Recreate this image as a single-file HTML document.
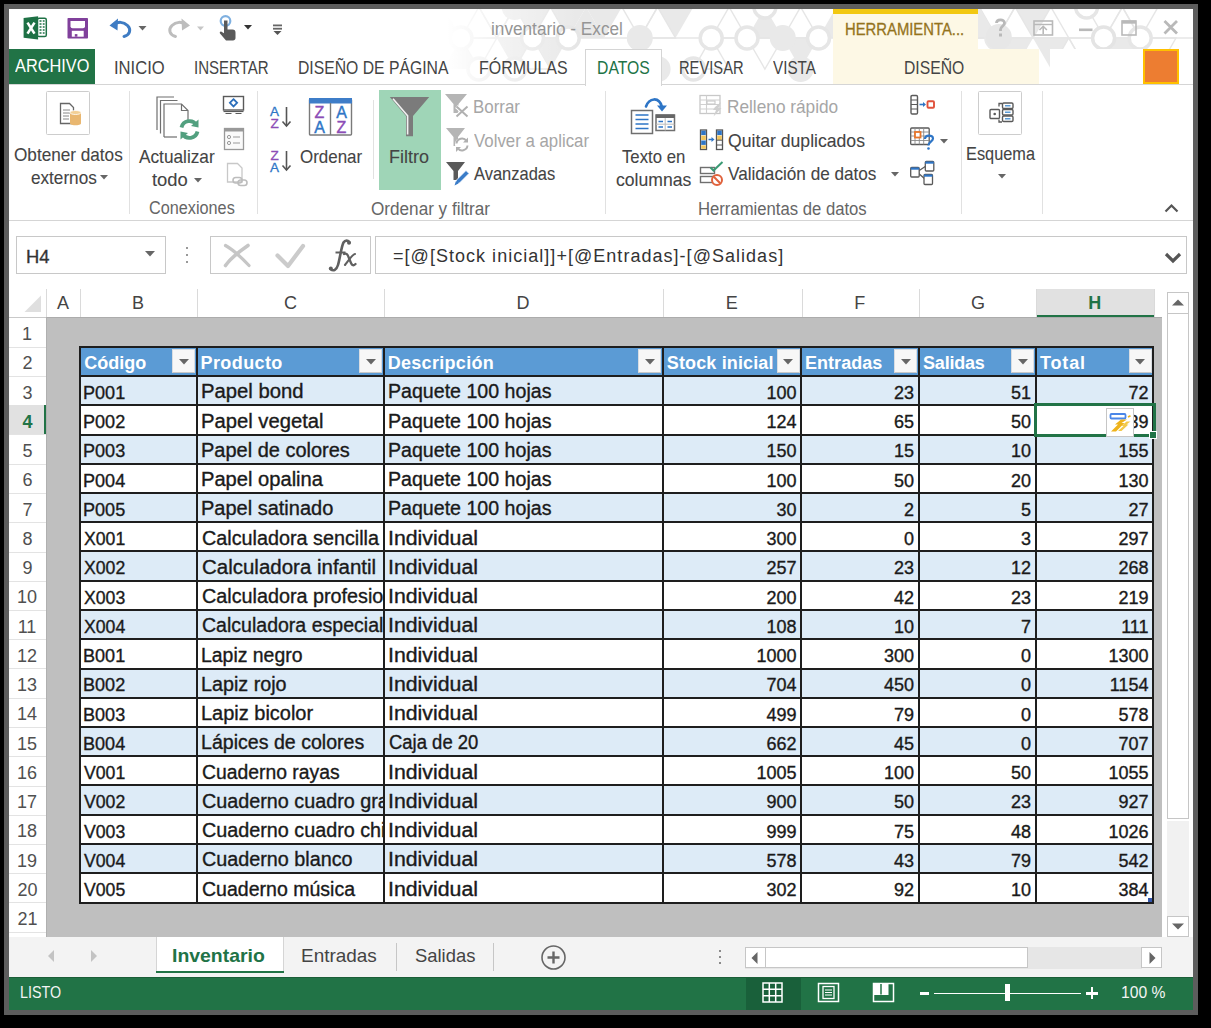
<!DOCTYPE html>
<html><head><meta charset="utf-8"><title>inventario - Excel</title>
<style>
html,body{margin:0;padding:0;}
body{width:1211px;height:1028px;overflow:hidden;position:relative;background:#000;font-family:"Liberation Sans", sans-serif;}
.a{position:absolute;}
.t{white-space:pre;line-height:1;}
svg.a{overflow:visible;}
</style></head><body>
<div class="a" style="left:4px;top:4px;width:1194px;height:1011px;background:#5d5d5d;"></div>
<div class="a" style="left:9px;top:9px;width:1184px;height:1001px;background:#ffffff;"></div>
<svg class="a" style="left:9px;top:9px;overflow:hidden" width="1184" height="75" viewBox="0 0 1184 75"><defs><linearGradient id="fade" x1="0" x2="1"><stop offset="0.37" stop-color="#fff" stop-opacity="1"/><stop offset="0.41" stop-color="#fff" stop-opacity="0.5"/><stop offset="0.48" stop-color="#fff" stop-opacity="0"/></linearGradient></defs><polygon points="398.4,-2.0 434.1,-2.0 416.2,29.0" fill="none" stroke="#e6e6e6" stroke-width="1.4"/><polygon points="380.5,29.0 416.2,29.0 398.4,-2.0" fill="#e9e9e9"/><polygon points="416.2,29.0 452.0,29.0 434.1,-2.0" fill="#e9e9e9"/><polygon points="469.9,-2.0 505.6,-2.0 487.8,29.0" fill="none" stroke="#e6e6e6" stroke-width="1.4"/><polygon points="452.0,29.0 487.8,29.0 469.9,-2.0" fill="none" stroke="#e6e6e6" stroke-width="1.4"/><polygon points="505.6,-2.0 541.4,-2.0 523.5,29.0" fill="#e9e9e9"/><polygon points="487.8,29.0 523.5,29.0 505.6,-2.0" fill="none" stroke="#e6e6e6" stroke-width="1.4"/><polygon points="541.4,-2.0 577.1,-2.0 559.2,29.0" fill="#e9e9e9"/><polygon points="523.5,29.0 559.2,29.0 541.4,-2.0" fill="none" stroke="#e6e6e6" stroke-width="1.4"/><polygon points="577.1,-2.0 612.9,-2.0 595.0,29.0" fill="#e9e9e9"/><polygon points="559.2,29.0 595.0,29.0 577.1,-2.0" fill="#e9e9e9"/><polygon points="612.9,-2.0 648.6,-2.0 630.8,29.0" fill="none" stroke="#e6e6e6" stroke-width="1.4"/><polygon points="648.6,-2.0 684.4,-2.0 666.5,29.0" fill="#e9e9e9"/><polygon points="630.8,29.0 666.5,29.0 648.6,-2.0" fill="none" stroke="#e6e6e6" stroke-width="1.4"/><polygon points="702.2,29.0 738.0,29.0 720.1,-2.0" fill="none" stroke="#e6e6e6" stroke-width="1.4"/><polygon points="738.0,29.0 773.8,29.0 755.9,-2.0" fill="#e9e9e9"/><polygon points="773.8,29.0 809.5,29.0 791.6,-2.0" fill="none" stroke="#e6e6e6" stroke-width="1.4"/><polygon points="827.4,-2.0 863.1,-2.0 845.2,29.0" fill="#e9e9e9"/><polygon points="809.5,29.0 845.2,29.0 827.4,-2.0" fill="#e9e9e9"/><polygon points="863.1,-2.0 898.9,-2.0 881.0,29.0" fill="none" stroke="#e6e6e6" stroke-width="1.4"/><polygon points="898.9,-2.0 934.6,-2.0 916.8,29.0" fill="none" stroke="#e6e6e6" stroke-width="1.4"/><polygon points="916.8,29.0 952.5,29.0 934.6,-2.0" fill="none" stroke="#e6e6e6" stroke-width="1.4"/><polygon points="970.4,-2.0 1006.1,-2.0 988.2,29.0" fill="none" stroke="#e6e6e6" stroke-width="1.4"/><polygon points="952.5,29.0 988.2,29.0 970.4,-2.0" fill="#e9e9e9"/><polygon points="1006.1,-2.0 1041.9,-2.0 1024.0,29.0" fill="#e9e9e9"/><polygon points="988.2,29.0 1024.0,29.0 1006.1,-2.0" fill="none" stroke="#e6e6e6" stroke-width="1.4"/><polygon points="1024.0,29.0 1059.8,29.0 1041.9,-2.0" fill="none" stroke="#e6e6e6" stroke-width="1.4"/><polygon points="1077.6,-2.0 1113.4,-2.0 1095.5,29.0" fill="none" stroke="#e6e6e6" stroke-width="1.4"/><polygon points="1113.4,-2.0 1149.1,-2.0 1131.2,29.0" fill="none" stroke="#e6e6e6" stroke-width="1.4"/><polygon points="1095.5,29.0 1131.2,29.0 1113.4,-2.0" fill="none" stroke="#e6e6e6" stroke-width="1.4"/><polygon points="1184.9,-2.0 1220.6,-2.0 1202.8,29.0" fill="none" stroke="#e6e6e6" stroke-width="1.4"/><polygon points="1220.6,-2.0 1256.4,-2.0 1238.5,29.0" fill="none" stroke="#e6e6e6" stroke-width="1.4"/><polygon points="398.4,60.0 434.1,60.0 416.2,29.0" fill="none" stroke="#e6e6e6" stroke-width="1.4"/><polygon points="434.1,60.0 469.9,60.0 452.0,29.0" fill="#e9e9e9"/><polygon points="452.0,29.0 487.8,29.0 469.9,60.0" fill="none" stroke="#e6e6e6" stroke-width="1.4"/><polygon points="487.8,29.0 523.5,29.0 505.6,60.0" fill="#e9e9e9"/><polygon points="505.6,60.0 541.4,60.0 523.5,29.0" fill="none" stroke="#e6e6e6" stroke-width="1.4"/><polygon points="523.5,29.0 559.2,29.0 541.4,60.0" fill="#e9e9e9"/><polygon points="612.9,60.0 648.6,60.0 630.8,29.0" fill="none" stroke="#e6e6e6" stroke-width="1.4"/><polygon points="684.4,60.0 720.1,60.0 702.2,29.0" fill="none" stroke="#e6e6e6" stroke-width="1.4"/><polygon points="738.0,29.0 773.8,29.0 755.9,60.0" fill="none" stroke="#e6e6e6" stroke-width="1.4"/><polygon points="773.8,29.0 809.5,29.0 791.6,60.0" fill="#e9e9e9"/><polygon points="863.1,60.0 898.9,60.0 881.0,29.0" fill="none" stroke="#e6e6e6" stroke-width="1.4"/><polygon points="881.0,29.0 916.8,29.0 898.9,60.0" fill="none" stroke="#e6e6e6" stroke-width="1.4"/><polygon points="916.8,29.0 952.5,29.0 934.6,60.0" fill="#e9e9e9"/><polygon points="934.6,60.0 970.4,60.0 952.5,29.0" fill="none" stroke="#e6e6e6" stroke-width="1.4"/><polygon points="952.5,29.0 988.2,29.0 970.4,60.0" fill="none" stroke="#e6e6e6" stroke-width="1.4"/><polygon points="970.4,60.0 1006.1,60.0 988.2,29.0" fill="#e9e9e9"/><polygon points="988.2,29.0 1024.0,29.0 1006.1,60.0" fill="#e9e9e9"/><polygon points="1024.0,29.0 1059.8,29.0 1041.9,60.0" fill="#e9e9e9"/><polygon points="1041.9,60.0 1077.6,60.0 1059.8,29.0" fill="none" stroke="#e6e6e6" stroke-width="1.4"/><polygon points="1059.8,29.0 1095.5,29.0 1077.6,60.0" fill="none" stroke="#e6e6e6" stroke-width="1.4"/><polygon points="1095.5,29.0 1131.2,29.0 1113.4,60.0" fill="#e9e9e9"/><polygon points="1113.4,60.0 1149.1,60.0 1131.2,29.0" fill="none" stroke="#e6e6e6" stroke-width="1.4"/><polygon points="1131.2,29.0 1167.0,29.0 1149.1,60.0" fill="none" stroke="#e6e6e6" stroke-width="1.4"/><polygon points="1202.8,29.0 1238.5,29.0 1220.6,60.0" fill="none" stroke="#e6e6e6" stroke-width="1.4"/><polygon points="1220.6,60.0 1256.4,60.0 1238.5,29.0" fill="none" stroke="#e6e6e6" stroke-width="1.4"/><path d="M0 29.0 H1184" stroke="#e6e6e6" stroke-width="1.6"/><circle cx="505.6" cy="-2.0" r="13" fill="#e9e9e9"/><circle cx="755.9" cy="-2.0" r="11" fill="#fff" stroke="#e6e6e6" stroke-width="3.5"/><circle cx="1077.6" cy="-2.0" r="11" fill="#fff" stroke="#e6e6e6" stroke-width="3.5"/><circle cx="452.0" cy="29.0" r="11" fill="#fff" stroke="#e6e6e6" stroke-width="3.5"/><circle cx="523.5" cy="29.0" r="11" fill="#fff" stroke="#e6e6e6" stroke-width="3.5"/><circle cx="559.2" cy="29.0" r="11" fill="#fff" stroke="#e6e6e6" stroke-width="3.5"/><circle cx="630.8" cy="29.0" r="13" fill="#e9e9e9"/><circle cx="702.2" cy="29.0" r="11" fill="#fff" stroke="#e6e6e6" stroke-width="3.5"/><circle cx="738.0" cy="29.0" r="11" fill="#fff" stroke="#e6e6e6" stroke-width="3.5"/><circle cx="773.8" cy="29.0" r="13" fill="#e9e9e9"/><circle cx="809.5" cy="29.0" r="11" fill="#fff" stroke="#e6e6e6" stroke-width="3.5"/><circle cx="881.0" cy="29.0" r="11" fill="#fff" stroke="#e6e6e6" stroke-width="3.5"/><circle cx="988.2" cy="29.0" r="13" fill="#e9e9e9"/><circle cx="1131.2" cy="29.0" r="11" fill="#fff" stroke="#e6e6e6" stroke-width="3.5"/><circle cx="469.9" cy="60.0" r="11" fill="#fff" stroke="#e6e6e6" stroke-width="3.5"/><circle cx="505.6" cy="60.0" r="11" fill="#fff" stroke="#e6e6e6" stroke-width="3.5"/><circle cx="648.6" cy="60.0" r="13" fill="#e9e9e9"/><circle cx="684.4" cy="60.0" r="11" fill="#fff" stroke="#e6e6e6" stroke-width="3.5"/><circle cx="791.6" cy="60.0" r="13" fill="#e9e9e9"/><circle cx="863.1" cy="60.0" r="11" fill="#fff" stroke="#e6e6e6" stroke-width="3.5"/><circle cx="1113.4" cy="60.0" r="13" fill="#e9e9e9"/><circle cx="989.8" cy="28" r="13" fill="#e7e7e7"/><circle cx="1094.6" cy="29" r="11" fill="#fff" stroke="#e4e4e4" stroke-width="3.5"/><rect x="0" y="0" width="1184" height="75" fill="url(#fade)"/></svg>
<svg class="a" style="left:23px;top:16px;" width="25" height="24" viewBox="0 0 25 24">
<path d="M0.6 1.9 L15.1 0.3 L15.1 23.4 L0.6 21.7 Z" fill="#1e7145"/>
<rect x="14.5" y="2.3" width="8.8" height="18.2" rx="1.6" fill="#fff" stroke="#1e7145" stroke-width="1.5"/>
<path d="M16.5 5h2M16.5 8h2M16.5 11h2M16.5 14h2M16.5 17h2M19.8 5h1.8M19.8 8h1.8M19.8 11h1.8M19.8 14h1.8M19.8 17h1.8" stroke="#1e7145" stroke-width="1.6"/>
<path d="M4.5 6.6 L11.5 17.6 M11.5 6.6 L4.5 17.6" stroke="#fff" stroke-width="2.6"/>
</svg>
<svg class="a" style="left:67px;top:18px;" width="22" height="21" viewBox="0 0 22 21">
<rect x="0.5" y="0" width="20.5" height="20.5" rx="0.8" fill="#80409b"/>
<path d="M3.5 3 H18 V8.2 a2 2 0 0 1 -2 2 H5.5 a2 2 0 0 1 -2 -2 Z" fill="#fff"/>
<rect x="4.8" y="12.8" width="11.9" height="5.9" fill="#fff"/>
<rect x="7.8" y="16.1" width="2.6" height="2.6" fill="#80409b"/>
</svg>
<svg class="a" style="left:109px;top:16px;" width="40" height="22" viewBox="0 0 40 22">
<path d="M4.5 8.5 C9 5.5 14.5 5.5 18.5 9.5 C22.5 13.5 21 19 15 20.5" fill="none" stroke="#3f7cc3" stroke-width="3" stroke-linecap="round"/>
<path d="M0.5 9.5 L9 2.5 L8.5 14.5 Z" fill="#3f7cc3"/>
<path d="M21.5 10 h8 l-4 4.5 z" fill="#666" transform="translate(8 0)"/>
</svg>
<svg class="a" style="left:166px;top:16px;" width="42" height="22" viewBox="0 0 42 22">
<path d="M20 8.5 C15.5 5.5 10 5.5 6 9.5 C2 13.5 3.5 19 9.5 20.5" fill="none" stroke="#bdbdbd" stroke-width="3" stroke-linecap="round"/>
<path d="M24 9.5 L15.5 2.5 L16 14.5 Z" fill="#bdbdbd"/>
<path d="M31 10.5 h7 l-3.5 4 z" fill="#c6c6c6"/>
</svg>
<svg class="a" style="left:216px;top:15px;" width="40" height="26" viewBox="0 0 40 26">
<circle cx="9.5" cy="6" r="4.8" fill="none" stroke="#7fb0e0" stroke-width="2.2"/>
<path d="M8 5.5 h3.5 v9 h5 c2 0 3 1 3 3 v5.5 c0 1.5 -1 2.5 -2.5 2.5 h-7 l-6 -7 c-0.8-1 0.3-2.5 1.5-1.8 l2.5 1.5 z" fill="#5a5a5a"/>
<path d="M28 10 h8 l-4 4.5 z" fill="#333"/>
</svg>
<svg class="a" style="left:272px;top:24px;" width="12" height="12" viewBox="0 0 12 12">
<rect x="1" y="0.5" width="9" height="1.8" fill="#666"/>
<rect x="1" y="3.8" width="9" height="1.8" fill="#666"/>
<path d="M1.5 7 h8 l-4 4 z" fill="#555"/>
</svg>
<div class="a t" style="left:490.52px;top:20.69px;font-size:17.5px;color:#959595;transform:scaleX(0.9824);transform-origin:0 0;">inventario - Excel</div>
<div class="a" style="left:833px;top:9px;width:145px;height:40px;background:#fdf8e5;"></div>
<div class="a" style="left:833px;top:9px;width:145px;height:4.5px;background:#f2c811;"></div>
<div class="a t" style="left:845.10px;top:21.43px;font-size:16.5px;color:#94731c;transform:scaleX(0.8982);transform-origin:0 0;-webkit-text-stroke:0.3px #94731c;">HERRAMIENTA...</div>
<div class="a" style="left:833px;top:49px;width:206px;height:35px;background:#fdf8e5;"></div>
<svg class="a" style="left:990px;top:15px;" width="200" height="30" viewBox="0 0 200 30">
<path d="M6.5 8 C6.5 4 14.5 3.5 14.5 8 C14.5 11 10.5 11.5 10.5 14.5 V16" fill="none" stroke="#b9b9b9" stroke-width="2.8"/>
<rect x="9" y="18.5" width="3" height="3" fill="#b9b9b9"/>
<rect x="44" y="6" width="18.5" height="14" fill="none" stroke="#b9b9b9" stroke-width="1.6"/>
<path d="M44 9.5 h18.5" stroke="#b9b9b9" stroke-width="1.4"/>
<path d="M53.2 19 v-7.5 M49.5 15 l3.7-3.7 l3.7 3.7" fill="none" stroke="#b9b9b9" stroke-width="1.6"/>
<rect x="89" y="13.5" width="13.5" height="2.6" fill="#b9b9b9"/>
<rect x="132" y="6" width="14" height="14" fill="none" stroke="#b9b9b9" stroke-width="1.6"/>
<rect x="132" y="5.5" width="14" height="3.2" fill="#b9b9b9"/>
<path d="M174.5 6 L187 18.5 M187 6 L174.5 18.5" stroke="#b9b9b9" stroke-width="2.8"/>
</svg>
<div class="a" style="left:1050px;top:49px;width:93px;height:35px;background:#ffffff;"></div>
<div class="a" style="left:1143px;top:49px;width:36px;height:35px;background:#ed7d31;box-sizing:border-box;border:2px solid #ffc000;"></div>
<div class="a" style="left:9px;top:49px;width:86px;height:35px;background:#217346;"></div>
<div class="a t" style="left:15.00px;top:57.34px;font-size:18.5px;color:#ffffff;transform:scaleX(0.8820);transform-origin:0 0;">ARCHIVO</div>
<div class="a t" style="left:113.90px;top:58.94px;font-size:18.5px;color:#444444;transform:scaleX(0.8977);transform-origin:0 0;">INICIO</div>
<div class="a t" style="left:194.49px;top:58.94px;font-size:18.5px;color:#444444;transform:scaleX(0.8124);transform-origin:0 0;">INSERTAR</div>
<div class="a t" style="left:298.45px;top:58.94px;font-size:18.5px;color:#444444;transform:scaleX(0.8511);transform-origin:0 0;">DISEÑO DE PÁGINA</div>
<div class="a t" style="left:478.74px;top:58.94px;font-size:18.5px;color:#444444;transform:scaleX(0.8615);transform-origin:0 0;">FÓRMULAS</div>
<div class="a t" style="left:678.70px;top:58.94px;font-size:18.5px;color:#444444;transform:scaleX(0.7952);transform-origin:0 0;">REVISAR</div>
<div class="a t" style="left:773.00px;top:58.94px;font-size:18.5px;color:#444444;transform:scaleX(0.8247);transform-origin:0 0;">VISTA</div>
<div class="a t" style="left:904.15px;top:58.94px;font-size:18.5px;color:#444444;transform:scaleX(0.8484);transform-origin:0 0;">DISEÑO</div>
<div class="a" style="left:9px;top:84px;width:1184px;height:1px;background:#d5d5d5;"></div>
<div class="a" style="left:585px;top:49px;width:77px;height:37px;background:#ffffff;box-sizing:border-box;border:1px solid #d5d5d5;border-bottom:none;"></div>
<div class="a t" style="left:597.15px;top:58.94px;font-size:18.5px;color:#217346;transform:scaleX(0.8520);transform-origin:0 0;">DATOS</div>
<div class="a" style="left:45.5px;top:91px;width:44px;height:43.5px;box-sizing:border-box;border:1.6px solid #cdcdcd;border-radius:1.5px;"></div>
<svg class="a" style="left:59px;top:102px;" width="24" height="24" viewBox="0 0 24 24">
<path d="M1.5 1.5 h9 l4 4 v16 h-13 z" fill="#fff" stroke="#666" stroke-width="1.3"/>
<path d="M4 8h7M4 11h7M4 14h6M4 17h6" stroke="#888" stroke-width="1"/>
<path d="M11 10.5 v11 c0 1.8 5.5 1.8 5.5 1.8 c0 0 5.5 0 5.5-1.8 v-11 z" fill="#e9b770"/>
<ellipse cx="16.5" cy="10.5" rx="5.5" ry="2" fill="#f3cf94" stroke="#fff" stroke-width="0.8"/>
</svg>
<div class="a t" style="left:14.00px;top:146.34px;font-size:18.5px;color:#444444;transform:scaleX(0.9274);transform-origin:0 0;-webkit-text-stroke:0.1px #444;">Obtener datos</div>
<div class="a t" style="left:31.00px;top:169.04px;font-size:18.5px;color:#444444;transform:scaleX(0.9264);transform-origin:0 0;-webkit-text-stroke:0.1px #444;">externos</div>
<svg class="a" style="left:100.0px;top:175px" width="8" height="5" viewBox="0 0 8 5"><path d="M0 0 H8 L4.0 4.5 Z" fill="#666"/></svg>
<div class="a" style="left:128.5px;top:91px;width:1px;height:123px;background:#e1e1e1;"></div>
<svg class="a" style="left:155px;top:96px;" width="48" height="46" viewBox="0 0 48 46">
<path d="M2 34 V1 h17" fill="none" stroke="#6f6f6f" stroke-width="1.2"/>
<path d="M5.5 37.5 V4.5 h17" fill="none" stroke="#6f6f6f" stroke-width="1.2"/>
<path d="M9 41 V8 h17.5 l6.5 6.5 v10" fill="#fff" stroke="#6f6f6f" stroke-width="1.2"/>
<path d="M9 41 h13" stroke="#6f6f6f" stroke-width="1.2"/>
<path d="M26.5 8 v6.5 h6.5" fill="none" stroke="#6f6f6f" stroke-width="1.2"/>
<circle cx="34.5" cy="33.5" r="10" fill="#fff"/>
<path d="M26.5 31.5 A8.2 8.2 0 0 1 41.5 29" fill="none" stroke="#52a07f" stroke-width="3.8"/>
<path d="M42.5 35.5 A8.2 8.2 0 0 1 27.5 38" fill="none" stroke="#52a07f" stroke-width="3.8"/>
<path d="M43.5 23.5 L43.5 31.5 L36 30 Z" fill="#52a07f"/>
<path d="M25.5 43.5 L25.5 35.5 L33 37 Z" fill="#52a07f"/>
</svg>
<div class="a t" style="left:138.50px;top:147.84px;font-size:18.5px;color:#444444;transform:scaleX(0.9313);transform-origin:0 0;-webkit-text-stroke:0.1px #444;">Actualizar</div>
<div class="a t" style="left:152.00px;top:171.34px;font-size:18.5px;color:#444444;transform:scaleX(0.9939);transform-origin:0 0;-webkit-text-stroke:0.1px #444;">todo</div>
<svg class="a" style="left:193.5px;top:178px" width="8" height="5" viewBox="0 0 8 5"><path d="M0 0 H8 L4.0 4.5 Z" fill="#666"/></svg>
<svg class="a" style="left:222px;top:95px;" width="26" height="22" viewBox="0 0 26 22">
<rect x="1.5" y="1.5" width="20" height="13.5" fill="#fff" stroke="#5a5a5a" stroke-width="1.4"/>
<path d="M1.5 16.5 h20" stroke="#5a5a5a" stroke-width="1.2"/>
<path d="M3.5 18.5 h6 M13.5 18.5 h6" stroke="#5a5a5a" stroke-width="1.2"/>
<path d="M11.5 4.2 l3.6 3.6 l-3.6 3.6 l-3.6 -3.6 z" fill="none" stroke="#2a6ebb" stroke-width="1.8"/>
</svg>
<svg class="a" style="left:223px;top:127px;" width="24" height="25" viewBox="0 0 24 25">
<rect x="1.5" y="1.5" width="19" height="21" fill="#fafafa" stroke="#999" stroke-width="1.3"/>
<rect x="1.5" y="1.5" width="19" height="3" fill="#999"/>
<circle cx="6" cy="10" r="1.6" fill="none" stroke="#999" stroke-width="1"/>
<circle cx="6" cy="16" r="1.6" fill="none" stroke="#999" stroke-width="1"/>
<path d="M10 10 h7 M10 16 h7" stroke="#999" stroke-width="1.2"/>
</svg>
<svg class="a" style="left:226px;top:162px;" width="24" height="25" viewBox="0 0 24 25">
<path d="M1.5 1.5 h10 l4.5 4.5 v14 h-14.5 z" fill="#fff" stroke="#c8c8c8" stroke-width="1.3"/>
<rect x="7" y="15.5" width="9" height="5.5" rx="2.7" fill="none" stroke="#bdbdbd" stroke-width="1.6"/>
<rect x="12" y="18" width="9" height="5.5" rx="2.7" fill="none" stroke="#bdbdbd" stroke-width="1.6"/>
</svg>
<div class="a t" style="left:149.00px;top:199.99px;font-size:17.5px;color:#666666;transform:scaleX(0.9280);transform-origin:0 0;">Conexiones</div>
<div class="a" style="left:257px;top:91px;width:1px;height:123px;background:#e1e1e1;"></div>
<svg class="a" style="left:268px;top:104px;" width="26" height="28" viewBox="0 0 26 28">
<text x="6.5" y="11.5" font-family="Liberation Sans" font-size="13.5" fill="#2e75c6" stroke="#2e75c6" stroke-width="0.3" text-anchor="middle">A</text>
<text x="6.5" y="24" font-family="Liberation Sans" font-size="13.5" fill="#8c4db6" stroke="#8c4db6" stroke-width="0.3" text-anchor="middle">Z</text>
<path d="M18.5 3 v19" stroke="#555" stroke-width="1.6"/>
<path d="M14.5 17.5 l4 4.5 l4 -4.5" fill="none" stroke="#555" stroke-width="1.6"/>
</svg>
<svg class="a" style="left:268px;top:148px;" width="26" height="28" viewBox="0 0 26 28">
<text x="6.5" y="11.5" font-family="Liberation Sans" font-size="13.5" fill="#8c4db6" stroke="#8c4db6" stroke-width="0.3" text-anchor="middle">Z</text>
<text x="6.5" y="24" font-family="Liberation Sans" font-size="13.5" fill="#2e75c6" stroke="#2e75c6" stroke-width="0.3" text-anchor="middle">A</text>
<path d="M18.5 3 v19" stroke="#555" stroke-width="1.6"/>
<path d="M14.5 17.5 l4 4.5 l4 -4.5" fill="none" stroke="#555" stroke-width="1.6"/>
</svg>
<svg class="a" style="left:308px;top:97px;" width="46" height="40" viewBox="0 0 46 40">
<rect x="1.5" y="2" width="42" height="36" rx="1" fill="#fff" stroke="#7a7a7a" stroke-width="1.4"/>
<rect x="1" y="1" width="43" height="5.5" fill="#3e7dc8"/>
<path d="M22.5 6 v32" stroke="#7a7a7a" stroke-width="1.4"/>
<text x="11.5" y="21" font-family="Liberation Sans" font-size="16" fill="#8c4db6" stroke="#8c4db6" stroke-width="0.4" text-anchor="middle">Z</text>
<text x="11.5" y="35.5" font-family="Liberation Sans" font-size="16" fill="#2e75c6" stroke="#2e75c6" stroke-width="0.4" text-anchor="middle">A</text>
<text x="33.5" y="21" font-family="Liberation Sans" font-size="16" fill="#2e75c6" stroke="#2e75c6" stroke-width="0.4" text-anchor="middle">A</text>
<text x="33.5" y="35.5" font-family="Liberation Sans" font-size="16" fill="#8c4db6" stroke="#8c4db6" stroke-width="0.4" text-anchor="middle">Z</text>
</svg>
<div class="a t" style="left:299.50px;top:148.34px;font-size:18.5px;color:#444444;transform:scaleX(0.9157);transform-origin:0 0;-webkit-text-stroke:0.1px #444;">Ordenar</div>
<div class="a" style="left:372.5px;top:100px;width:1px;height:79px;background:#e1e1e1;"></div>
<div class="a" style="left:379px;top:90px;width:62px;height:100px;background:#9fd5b7;"></div>
<svg class="a" style="left:388px;top:96px;" width="44" height="42" viewBox="0 0 44 42">
<path d="M1.8 1 H41.2 L25 20 V40.3 H18 V20 Z" fill="#7b7b7b"/>
<path d="M5 2.8 L19.6 19.8 V38.5" fill="none" stroke="#f2f2f2" stroke-width="1.6"/>
</svg>
<div class="a t" style="left:389.03px;top:148.34px;font-size:18.5px;color:#444444;transform:scaleX(0.9718);transform-origin:0 0;-webkit-text-stroke:0.1px #444;">Filtro</div>
<svg class="a" style="left:444px;top:93px;" width="28" height="26" viewBox="0 0 28 26">
<path d="M1 1 H23 L14.5 11 V20 H9.5 V11 Z" fill="#b5b5b5"/>
<path d="M12.5 13.5 L23.5 23.5 M23.5 13.5 L12.5 23.5" stroke="#fff" stroke-width="4"/>
<path d="M12.5 13.5 L23.5 23.5 M23.5 13.5 L12.5 23.5" stroke="#b0b0b0" stroke-width="2"/>
</svg>
<div class="a t" style="left:472.69px;top:98.34px;font-size:18.5px;color:#a6a6a6;transform:scaleX(0.9136);transform-origin:0 0;">Borrar</div>
<svg class="a" style="left:444px;top:127px;" width="28" height="26" viewBox="0 0 28 26">
<path d="M2 1 H21 L14 10 V19 H9.5 V10 Z" fill="#b5b5b5"/>
<circle cx="18" cy="17.5" r="7" fill="#fff"/>
<path d="M12.5 16.5 A5.5 5.5 0 0 1 22.5 14" fill="none" stroke="#b0b0b0" stroke-width="2"/>
<path d="M23.5 18.5 A5.5 5.5 0 0 1 13.5 21" fill="none" stroke="#b0b0b0" stroke-width="2"/>
<path d="M24 10.5 v5 h-5 z" fill="#b0b0b0"/>
<path d="M12 25 v-5 h5 z" fill="#b0b0b0"/>
</svg>
<div class="a t" style="left:473.60px;top:131.94px;font-size:18.5px;color:#a6a6a6;transform:scaleX(0.9096);transform-origin:0 0;">Volver a aplicar</div>
<svg class="a" style="left:444px;top:161px;" width="28" height="26" viewBox="0 0 28 26">
<path d="M2 1 H21 L14 10 V19 H9.5 V10 Z" fill="#5a5a5a"/>
<path d="M11 23.5 L12.5 19 L22 9.5 L25 12.5 L15.5 22 Z" fill="#3a7cc8" stroke="#fff" stroke-width="0.8"/>
<path d="M10.5 24.5 L12 20 L14.5 22.5 Z" fill="#3a7cc8"/>
</svg>
<div class="a t" style="left:473.60px;top:165.34px;font-size:18.5px;color:#444444;transform:scaleX(0.8906);transform-origin:0 0;-webkit-text-stroke:0.1px #444;">Avanzadas</div>
<div class="a t" style="left:371.30px;top:200.59px;font-size:17.5px;color:#666666;transform:scaleX(0.9792);transform-origin:0 0;">Ordenar y filtrar</div>
<div class="a" style="left:605px;top:91px;width:1px;height:123px;background:#e1e1e1;"></div>
<svg class="a" style="left:629px;top:95px;" width="50" height="40" viewBox="0 0 50 40">
<path d="M17 11.5 C20 3 30 1 33 12" fill="none" stroke="#2e75c6" stroke-width="2.6" stroke-linecap="round"/>
<path d="M28 10.5 L38 10.5 L33 16.5 Z" fill="#2e75c6"/>
<rect x="2.5" y="15.5" width="21" height="23" fill="#fff" stroke="#6f6f6f" stroke-width="1.5"/>
<path d="M6.5 20h13M6.5 24.5h13M6.5 29h13M6.5 33.5h13" stroke="#2e75c6" stroke-width="1.5"/>
<rect x="27" y="20" width="18.5" height="15.5" fill="#fff" stroke="#6f6f6f" stroke-width="1.5"/>
<rect x="27" y="19.5" width="18.5" height="3.5" fill="#666"/>
<path d="M36.2 23v12.5M27 29.2h18.5" stroke="#bbb" stroke-width="1"/>
<path d="M29.5 26.5h4.5M38.5 26.5h4.5M29.5 32h4.5M38.5 32h4.5" stroke="#2e75c6" stroke-width="1.6"/>
</svg>
<div class="a t" style="left:622.00px;top:148.34px;font-size:18.5px;color:#444444;transform:scaleX(0.9046);transform-origin:0 0;-webkit-text-stroke:0.1px #444;">Texto en</div>
<div class="a t" style="left:616.00px;top:170.74px;font-size:18.5px;color:#444444;transform:scaleX(0.9503);transform-origin:0 0;-webkit-text-stroke:0.1px #444;">columnas</div>
<svg class="a" style="left:698px;top:94px;" width="26" height="25" viewBox="0 0 26 25">
<rect x="2" y="1.5" width="20" height="18" fill="#fff" stroke="#c8c8c8" stroke-width="1.3"/>
<path d="M2 6h20M2 10.5h20M2 15h20M8.5 1.5v18" stroke="#d0d0d0" stroke-width="1.1"/>
<rect x="9" y="7" width="8" height="3" fill="none" stroke="#c8c8c8" stroke-width="1.1"/>
<path d="M17 13 L23 8 L20.5 14 L23.5 14 L15.5 22.5 L18 16 L15 16 Z" fill="#d0d0d0"/>
</svg>
<div class="a t" style="left:727.37px;top:98.34px;font-size:18.5px;color:#a6a6a6;transform:scaleX(0.9321);transform-origin:0 0;">Relleno rápido</div>
<svg class="a" style="left:698px;top:127px;" width="26" height="24" viewBox="0 0 26 24">
<rect x="2.5" y="3" width="6" height="19.5" fill="#fff" stroke="#555" stroke-width="1.3"/>
<rect x="3.2" y="3.7" width="4.6" height="4.4" fill="#2e75c6"/>
<rect x="3.2" y="8.6" width="4.6" height="4.4" fill="#f2c55c"/>
<rect x="3.2" y="13.5" width="4.6" height="4.4" fill="#2e75c6"/>
<rect x="3.2" y="18.4" width="4.6" height="3.4" fill="#f2c55c"/>
<rect x="18.5" y="3" width="6" height="19.5" fill="#fff" stroke="#555" stroke-width="1.3"/>
<rect x="19.2" y="3.7" width="4.6" height="4.4" fill="#2e75c6"/>
<rect x="19.2" y="8.6" width="4.6" height="4.4" fill="#f2c55c"/>
<path d="M18.5 13.2h6M18.5 18h6" stroke="#555" stroke-width="1"/>
<path d="M10.5 12.5 h4" stroke="#2e75c6" stroke-width="1.5"/>
<path d="M13.5 10 l3 2.5 l-3 2.5 z" fill="#2e75c6"/>
</svg>
<div class="a t" style="left:728.30px;top:131.94px;font-size:18.5px;color:#444444;transform:scaleX(0.9511);transform-origin:0 0;-webkit-text-stroke:0.1px #444;">Quitar duplicados</div>
<svg class="a" style="left:698px;top:160px;" width="26" height="26" viewBox="0 0 26 26">
<rect x="2.5" y="7.5" width="14" height="6" fill="#fff" stroke="#6f6f6f" stroke-width="1.4"/>
<rect x="2.5" y="16.5" width="14" height="6" fill="#fff" stroke="#6f6f6f" stroke-width="1.4"/>
<path d="M12.5 7.5 L15.5 10.5 L24.5 2" fill="none" stroke="#3b9a74" stroke-width="2"/>
<circle cx="19" cy="20" r="5" fill="#fff" stroke="#e0623c" stroke-width="2"/>
<path d="M15.8 16.8 L22.2 23.2" stroke="#e0623c" stroke-width="2"/>
</svg>
<div class="a t" style="left:728.30px;top:165.34px;font-size:18.5px;color:#444444;transform:scaleX(0.9271);transform-origin:0 0;-webkit-text-stroke:0.1px #444;">Validación de datos</div>
<svg class="a" style="left:891.0px;top:172px" width="8" height="5" viewBox="0 0 8 5"><path d="M0 0 H8 L4.0 4.5 Z" fill="#666"/></svg>
<svg class="a" style="left:908px;top:94px;" width="30" height="22" viewBox="0 0 30 22">
<rect x="3" y="1.5" width="6.5" height="18.5" rx="1.2" fill="#fff" stroke="#5a5a5a" stroke-width="1.4"/>
<path d="M3 6h6.5M3 10.5h6.5M3 15h6.5" stroke="#5a5a5a" stroke-width="1.2"/>
<path d="M11.5 10.5 h4.5" stroke="#2e75c6" stroke-width="1.6"/>
<path d="M15 8 l3 2.5 l-3 2.5 z" fill="#2e75c6"/>
<rect x="19.5" y="7.2" width="6.5" height="6.5" rx="1" fill="#fff" stroke="#e0523c" stroke-width="1.9"/>
</svg>
<svg class="a" style="left:908px;top:126px;" width="40" height="26" viewBox="0 0 40 26">
<rect x="2.7" y="2" width="18.5" height="16.5" rx="1" fill="#fff" stroke="#5a5a5a" stroke-width="1.3"/>
<path d="M2.7 6h18.5M2.7 10h18.5M2.7 14.5h18.5M7 2v16.5M11.3 2v16.5M15.7 2v16.5" stroke="#8a8a8a" stroke-width="0.9"/>
<rect x="7" y="6" width="5.5" height="5.5" fill="#fff" stroke="#e8762b" stroke-width="1.8"/>
<path d="M17 13 C17 8.5 25 8.5 25 12.5 C25 15.5 20.5 16 20.5 19.5" fill="none" stroke="#2e75c6" stroke-width="2.2"/>
<circle cx="20.5" cy="22.5" r="1.3" fill="#2e75c6"/>
<path d="M32 13 h8 l-4 4.5 z" fill="#666"/>
</svg>
<svg class="a" style="left:908px;top:160px;" width="30" height="26" viewBox="0 0 30 26">
<path d="M9 12 L18 6 M9 12 L17 19" stroke="#5a5a5a" stroke-width="1.3"/>
<rect x="2.7" y="7.5" width="8.5" height="9.5" rx="1" fill="#fff" stroke="#5a5a5a" stroke-width="1.3"/>
<rect x="2.7" y="7.5" width="8.5" height="2.2" fill="#2e75c6"/>
<rect x="17.3" y="1.5" width="8.5" height="9.5" rx="1" fill="#fff" stroke="#5a5a5a" stroke-width="1.3"/>
<rect x="17.3" y="1.5" width="8.5" height="2.2" fill="#2e75c6"/>
<rect x="16" y="14.5" width="8.5" height="10" rx="1" fill="#fff" stroke="#5a5a5a" stroke-width="1.3"/>
<rect x="16" y="14.5" width="8.5" height="2.2" fill="#2e75c6"/>
</svg>
<div class="a t" style="left:698.35px;top:200.59px;font-size:17.5px;color:#666666;transform:scaleX(0.9530);transform-origin:0 0;">Herramientas de datos</div>
<div class="a" style="left:961px;top:91px;width:1px;height:123px;background:#e1e1e1;"></div>
<div class="a" style="left:978px;top:91px;width:44px;height:43.5px;box-sizing:border-box;border:1.6px solid #cdcdcd;border-radius:1.5px;"></div>
<svg class="a" style="left:988px;top:100px;" width="26" height="24" viewBox="0 0 26 24">
<rect x="2" y="9.5" width="9.5" height="9" rx="1" fill="#fff" stroke="#5a5a5a" stroke-width="1.4"/>
<circle cx="6.7" cy="14" r="1.3" fill="#5a5a5a"/>
<path d="M14 3.5 h-3 v3 M14 22 h-3 v-2.5" fill="none" stroke="#5a5a5a" stroke-width="1.3"/>
<rect x="14.5" y="3" width="10.5" height="5.5" rx="1.2" fill="#fff" stroke="#5a5a5a" stroke-width="1.4"/>
<rect x="14.5" y="9.5" width="10.5" height="5.5" rx="1.2" fill="#fff" stroke="#5a5a5a" stroke-width="1.4"/>
<rect x="14.5" y="16" width="10.5" height="5.5" rx="1.2" fill="#fff" stroke="#5a5a5a" stroke-width="1.4"/>
<path d="M17 5.8h5.5M17 12.3h5.5M17 18.8h5.5" stroke="#5b9bd5" stroke-width="1.5"/>
</svg>
<div class="a t" style="left:966.12px;top:144.84px;font-size:18.5px;color:#444444;transform:scaleX(0.8823);transform-origin:0 0;-webkit-text-stroke:0.1px #444;">Esquema</div>
<svg class="a" style="left:998.0px;top:174px" width="8" height="5" viewBox="0 0 8 5"><path d="M0 0 H8 L4.0 4.5 Z" fill="#666"/></svg>
<div class="a" style="left:1041.5px;top:91px;width:1px;height:123px;background:#e1e1e1;"></div>
<svg class="a" style="left:1164px;top:203px;" width="16" height="11" viewBox="0 0 16 11"><path d="M1.5 8.5 L7.5 2.5 L13.5 8.5" fill="none" stroke="#555" stroke-width="2.2"/></svg>
<div class="a" style="left:9px;top:220px;width:1184px;height:1px;background:#d5d5d5;"></div>
<div class="a" style="left:16px;top:236px;width:150px;height:38px;background:#ffffff;box-sizing:border-box;border:1.5px solid #c8c8c8;"></div>
<div class="a t" style="left:25.98px;top:247.76px;font-size:18px;color:#333333;transform:scaleX(1.0228);transform-origin:0 0;-webkit-text-stroke:0.3px #333;">H4</div>
<svg class="a" style="left:145px;top:251px" width="10" height="6" viewBox="0 0 10 6"><path d="M0 0 H10 L5 5.5 Z" fill="#666"/></svg>
<div class="a" style="left:186px;top:247px;width:2.2px;height:2.2px;background:#777777;border-radius:1px;"></div>
<div class="a" style="left:186px;top:254px;width:2.2px;height:2.2px;background:#777777;border-radius:1px;"></div>
<div class="a" style="left:186px;top:261px;width:2.2px;height:2.2px;background:#777777;border-radius:1px;"></div>
<div class="a" style="left:209.5px;top:236px;width:161px;height:38px;background:#ffffff;box-sizing:border-box;border:1.5px solid #c8c8c8;"></div>
<svg class="a" style="left:222px;top:243px;" width="140" height="28" viewBox="0 0 140 28">
<path d="M3.5 2.5 C8 5 18 13 27 22.5" fill="none" stroke="#c6c6c6" stroke-width="3.2" stroke-linecap="round"/>
<path d="M26 2.5 C18 8 8 16 3.5 22.5" fill="none" stroke="#c6c6c6" stroke-width="3.6" stroke-linecap="round"/>
<path d="M55.5 12.5 L66 23 L81 3" fill="none" stroke="#cbcbcb" stroke-width="4.2" stroke-linejoin="round" stroke-linecap="round"/>
</svg>
<svg class="a" style="left:325px;top:238px;" width="34" height="36" viewBox="0 0 34 36">
<path d="M24.5 4.5 C23.5 2 20 2 18.5 4.5 C16.5 8 15 20 13 27 C11.5 32 8.5 33.5 5.5 31" fill="none" stroke="#606060" stroke-width="2.6" stroke-linecap="round"/>
<circle cx="24" cy="4.8" r="2" fill="#606060"/>
<circle cx="5.8" cy="30.6" r="2" fill="#606060"/>
<path d="M10.5 14.5 H20.5" stroke="#606060" stroke-width="2"/>
<path d="M19 16 C21 15 22.5 16 23.5 19 L26 25 C27 27.5 28.5 28 30.5 26" fill="none" stroke="#606060" stroke-width="2.3" stroke-linecap="round"/>
<path d="M30 16 C28 16 26 19 20 27" fill="none" stroke="#606060" stroke-width="2.1" stroke-linecap="round"/>
</svg>
<div class="a" style="left:375px;top:236px;width:811.5px;height:38px;background:#ffffff;box-sizing:border-box;border:1.5px solid #c8c8c8;"></div>
<div class="a t" style="left:393.00px;top:247.26px;font-size:18px;color:#333333;letter-spacing:1.03px;">=[@[Stock inicial]]+[@Entradas]-[@Salidas]</div>
<svg class="a" style="left:1164px;top:251px;" width="20" height="14" viewBox="0 0 20 14"><path d="M2 3 L9 10 L16 3" fill="none" stroke="#555" stroke-width="3.2"/></svg>
<div class="a" style="left:1036px;top:289px;width:117.5px;height:28px;background:#e1e1e1;"></div>
<div class="a" style="left:1036px;top:315px;width:117.5px;height:2.5px;background:#217346;"></div>
<div class="a" style="left:46px;top:289px;width:1px;height:28px;background:#dadada;"></div>
<div class="a" style="left:80px;top:289px;width:1px;height:28px;background:#dadada;"></div>
<div class="a" style="left:197px;top:289px;width:1px;height:28px;background:#dadada;"></div>
<div class="a" style="left:384px;top:289px;width:1px;height:28px;background:#dadada;"></div>
<div class="a" style="left:663px;top:289px;width:1px;height:28px;background:#dadada;"></div>
<div class="a" style="left:801.5px;top:289px;width:1px;height:28px;background:#dadada;"></div>
<div class="a" style="left:919px;top:289px;width:1px;height:28px;background:#dadada;"></div>
<div class="a" style="left:1036px;top:289px;width:1px;height:28px;background:#dadada;"></div>
<div class="a" style="left:1153.5px;top:289px;width:1px;height:28px;background:#dadada;"></div>
<div class="a" style="left:9px;top:317px;width:37px;height:1px;background:#c9c9c9;"></div>
<svg class="a" style="left:24px;top:295px;" width="18" height="18" viewBox="0 0 18 18"><path d="M17 0.5 V17 H0.5 Z" fill="#dfdfdf"/></svg>
<div class="a t" style="left:57.00px;top:293.96px;font-size:18px;color:#444444;">A</div>
<div class="a t" style="left:132.00px;top:293.96px;font-size:18px;color:#444444;">B</div>
<div class="a t" style="left:284.00px;top:293.96px;font-size:18px;color:#444444;">C</div>
<div class="a t" style="left:516.50px;top:293.96px;font-size:18px;color:#444444;">D</div>
<div class="a t" style="left:725.75px;top:293.96px;font-size:18px;color:#444444;">E</div>
<div class="a t" style="left:854.25px;top:293.96px;font-size:18px;color:#444444;">F</div>
<div class="a t" style="left:971.00px;top:293.96px;font-size:18px;color:#444444;">G</div>
<div class="a t" style="left:1088.25px;top:293.96px;font-size:18px;color:#217346;font-weight:700;">H</div>
<div class="a" style="left:9px;top:347px;width:37px;height:1px;background:#e3e3e3;"></div>
<div class="a t" style="left:22.00px;top:325.06px;font-size:18px;color:#505050;">1</div>
<div class="a" style="left:9px;top:376px;width:37px;height:1px;background:#e3e3e3;"></div>
<div class="a t" style="left:22.50px;top:354.31px;font-size:18px;color:#505050;">2</div>
<div class="a" style="left:9px;top:405px;width:37px;height:1px;background:#e3e3e3;"></div>
<div class="a t" style="left:22.50px;top:383.56px;font-size:18px;color:#505050;">3</div>
<div class="a" style="left:9px;top:405.25px;width:37px;height:29.25px;background:#e1e1e1;"></div>
<div class="a" style="left:43.5px;top:405.25px;width:2.5px;height:29.25px;background:#217346;"></div>
<div class="a" style="left:9px;top:434px;width:37px;height:1px;background:#e3e3e3;"></div>
<div class="a t" style="left:22.50px;top:412.81px;font-size:18px;color:#217346;font-weight:700;">4</div>
<div class="a" style="left:9px;top:464px;width:37px;height:1px;background:#e3e3e3;"></div>
<div class="a t" style="left:22.50px;top:442.06px;font-size:18px;color:#505050;">5</div>
<div class="a" style="left:9px;top:493px;width:37px;height:1px;background:#e3e3e3;"></div>
<div class="a t" style="left:22.50px;top:471.31px;font-size:18px;color:#505050;">6</div>
<div class="a" style="left:9px;top:522px;width:37px;height:1px;background:#e3e3e3;"></div>
<div class="a t" style="left:22.50px;top:500.56px;font-size:18px;color:#505050;">7</div>
<div class="a" style="left:9px;top:552px;width:37px;height:1px;background:#e3e3e3;"></div>
<div class="a t" style="left:22.50px;top:529.81px;font-size:18px;color:#505050;">8</div>
<div class="a" style="left:9px;top:581px;width:37px;height:1px;background:#e3e3e3;"></div>
<div class="a t" style="left:22.50px;top:559.06px;font-size:18px;color:#505050;">9</div>
<div class="a" style="left:9px;top:610px;width:37px;height:1px;background:#e3e3e3;"></div>
<div class="a t" style="left:16.99px;top:588.31px;font-size:18px;color:#505050;">10</div>
<div class="a" style="left:9px;top:639px;width:37px;height:1px;background:#e3e3e3;"></div>
<div class="a t" style="left:17.66px;top:617.56px;font-size:18px;color:#505050;">11</div>
<div class="a" style="left:9px;top:668px;width:37px;height:1px;background:#e3e3e3;"></div>
<div class="a t" style="left:16.99px;top:646.81px;font-size:18px;color:#505050;">12</div>
<div class="a" style="left:9px;top:698px;width:37px;height:1px;background:#e3e3e3;"></div>
<div class="a t" style="left:16.99px;top:676.06px;font-size:18px;color:#505050;">13</div>
<div class="a" style="left:9px;top:727px;width:37px;height:1px;background:#e3e3e3;"></div>
<div class="a t" style="left:16.99px;top:705.31px;font-size:18px;color:#505050;">14</div>
<div class="a" style="left:9px;top:756px;width:37px;height:1px;background:#e3e3e3;"></div>
<div class="a t" style="left:16.99px;top:734.56px;font-size:18px;color:#505050;">15</div>
<div class="a" style="left:9px;top:786px;width:37px;height:1px;background:#e3e3e3;"></div>
<div class="a t" style="left:16.99px;top:763.81px;font-size:18px;color:#505050;">16</div>
<div class="a" style="left:9px;top:815px;width:37px;height:1px;background:#e3e3e3;"></div>
<div class="a t" style="left:16.99px;top:793.06px;font-size:18px;color:#505050;">17</div>
<div class="a" style="left:9px;top:844px;width:37px;height:1px;background:#e3e3e3;"></div>
<div class="a t" style="left:16.99px;top:822.31px;font-size:18px;color:#505050;">18</div>
<div class="a" style="left:9px;top:873px;width:37px;height:1px;background:#e3e3e3;"></div>
<div class="a t" style="left:16.99px;top:851.56px;font-size:18px;color:#505050;">19</div>
<div class="a" style="left:9px;top:902px;width:37px;height:1px;background:#e3e3e3;"></div>
<div class="a t" style="left:17.49px;top:880.81px;font-size:18px;color:#505050;">20</div>
<div class="a" style="left:9px;top:932px;width:37px;height:1px;background:#e3e3e3;"></div>
<div class="a t" style="left:17.49px;top:910.06px;font-size:18px;color:#505050;">21</div>
<div class="a" style="left:46px;top:317px;width:1116px;height:620px;background:#bfbfbf;"></div>
<div class="a" style="left:46px;top:317px;width:1116px;height:1.3px;background:#acacac;"></div>
<div class="a" style="left:46px;top:317px;width:1.3px;height:620px;background:#b0b0b0;"></div>
<div class="a" style="left:80px;top:346.75px;width:1073px;height:29.25px;background:#5b9bd5;"></div>
<div class="a" style="left:80px;top:376.0px;width:1073px;height:29.25px;background:#ddebf7;"></div>
<div class="a" style="left:80px;top:405.25px;width:1073px;height:29.25px;background:#ffffff;"></div>
<div class="a" style="left:80px;top:434.5px;width:1073px;height:29.25px;background:#ddebf7;"></div>
<div class="a" style="left:80px;top:463.75px;width:1073px;height:29.25px;background:#ffffff;"></div>
<div class="a" style="left:80px;top:493.0px;width:1073px;height:29.25px;background:#ddebf7;"></div>
<div class="a" style="left:80px;top:522.25px;width:1073px;height:29.25px;background:#ffffff;"></div>
<div class="a" style="left:80px;top:551.5px;width:1073px;height:29.25px;background:#ddebf7;"></div>
<div class="a" style="left:80px;top:580.75px;width:1073px;height:29.25px;background:#ffffff;"></div>
<div class="a" style="left:80px;top:610.0px;width:1073px;height:29.25px;background:#ddebf7;"></div>
<div class="a" style="left:80px;top:639.25px;width:1073px;height:29.25px;background:#ffffff;"></div>
<div class="a" style="left:80px;top:668.5px;width:1073px;height:29.25px;background:#ddebf7;"></div>
<div class="a" style="left:80px;top:697.75px;width:1073px;height:29.25px;background:#ffffff;"></div>
<div class="a" style="left:80px;top:727.0px;width:1073px;height:29.25px;background:#ddebf7;"></div>
<div class="a" style="left:80px;top:756.25px;width:1073px;height:29.25px;background:#ffffff;"></div>
<div class="a" style="left:80px;top:785.5px;width:1073px;height:29.25px;background:#ddebf7;"></div>
<div class="a" style="left:80px;top:814.75px;width:1073px;height:29.25px;background:#ffffff;"></div>
<div class="a" style="left:80px;top:844.0px;width:1073px;height:29.25px;background:#ddebf7;"></div>
<div class="a" style="left:80px;top:873.25px;width:1073px;height:29.25px;background:#ffffff;"></div>
<div class="a" style="left:79px;top:346px;width:1075px;height:2px;background:#1e1e1e;"></div>
<div class="a" style="left:79px;top:375px;width:1075px;height:2px;background:#1e1e1e;"></div>
<div class="a" style="left:79px;top:404px;width:1075px;height:2px;background:#1e1e1e;"></div>
<div class="a" style="left:79px;top:434px;width:1075px;height:2px;background:#1e1e1e;"></div>
<div class="a" style="left:79px;top:463px;width:1075px;height:2px;background:#1e1e1e;"></div>
<div class="a" style="left:79px;top:492px;width:1075px;height:2px;background:#1e1e1e;"></div>
<div class="a" style="left:79px;top:521px;width:1075px;height:2px;background:#1e1e1e;"></div>
<div class="a" style="left:79px;top:550px;width:1075px;height:2px;background:#1e1e1e;"></div>
<div class="a" style="left:79px;top:580px;width:1075px;height:2px;background:#1e1e1e;"></div>
<div class="a" style="left:79px;top:609px;width:1075px;height:2px;background:#1e1e1e;"></div>
<div class="a" style="left:79px;top:638px;width:1075px;height:2px;background:#1e1e1e;"></div>
<div class="a" style="left:79px;top:668px;width:1075px;height:2px;background:#1e1e1e;"></div>
<div class="a" style="left:79px;top:697px;width:1075px;height:2px;background:#1e1e1e;"></div>
<div class="a" style="left:79px;top:726px;width:1075px;height:2px;background:#1e1e1e;"></div>
<div class="a" style="left:79px;top:755px;width:1075px;height:2px;background:#1e1e1e;"></div>
<div class="a" style="left:79px;top:784px;width:1075px;height:2px;background:#1e1e1e;"></div>
<div class="a" style="left:79px;top:814px;width:1075px;height:2px;background:#1e1e1e;"></div>
<div class="a" style="left:79px;top:843px;width:1075px;height:2px;background:#1e1e1e;"></div>
<div class="a" style="left:79px;top:872px;width:1075px;height:2px;background:#1e1e1e;"></div>
<div class="a" style="left:79px;top:902px;width:1075px;height:2px;background:#1e1e1e;"></div>
<div class="a" style="left:79px;top:346px;width:2px;height:558px;background:#1e1e1e;"></div>
<div class="a" style="left:196px;top:346px;width:2px;height:558px;background:#1e1e1e;"></div>
<div class="a" style="left:383px;top:346px;width:2px;height:558px;background:#1e1e1e;"></div>
<div class="a" style="left:662px;top:346px;width:2px;height:558px;background:#1e1e1e;"></div>
<div class="a" style="left:800px;top:346px;width:2px;height:558px;background:#1e1e1e;"></div>
<div class="a" style="left:918px;top:346px;width:2px;height:558px;background:#1e1e1e;"></div>
<div class="a" style="left:1035px;top:346px;width:2px;height:558px;background:#1e1e1e;"></div>
<div class="a" style="left:1152px;top:346px;width:2px;height:558px;background:#1e1e1e;"></div>
<div class="a t" style="left:84.20px;top:353.51px;font-size:18px;color:#ffffff;font-weight:700;letter-spacing:0.02px;">Código</div>
<div class="a" style="left:172px;top:349.25px;width:23px;height:24px;background:#f7f7f7;box-sizing:border-box;border:1px solid #d9dde2;border-bottom-color:#c8c8c8"></div>
<svg class="a" style="left:178.5px;top:359.25px" width="10" height="6" viewBox="0 0 10 6"><path d="M0 0 H10 L5 5.5 Z" fill="#666"/></svg>
<div class="a t" style="left:200.50px;top:353.51px;font-size:18px;color:#ffffff;font-weight:700;letter-spacing:0.41px;">Producto</div>
<div class="a" style="left:359px;top:349.25px;width:23px;height:24px;background:#f7f7f7;box-sizing:border-box;border:1px solid #d9dde2;border-bottom-color:#c8c8c8"></div>
<svg class="a" style="left:365.5px;top:359.25px" width="10" height="6" viewBox="0 0 10 6"><path d="M0 0 H10 L5 5.5 Z" fill="#666"/></svg>
<div class="a t" style="left:387.70px;top:353.51px;font-size:18px;color:#ffffff;font-weight:700;letter-spacing:0.30px;">Descripción</div>
<div class="a" style="left:638px;top:349.25px;width:23px;height:24px;background:#f7f7f7;box-sizing:border-box;border:1px solid #d9dde2;border-bottom-color:#c8c8c8"></div>
<svg class="a" style="left:644.5px;top:359.25px" width="10" height="6" viewBox="0 0 10 6"><path d="M0 0 H10 L5 5.5 Z" fill="#666"/></svg>
<div class="a t" style="left:666.80px;top:353.51px;font-size:18px;color:#ffffff;font-weight:700;letter-spacing:0.14px;">Stock inicial</div>
<div class="a" style="left:776.5px;top:349.25px;width:23px;height:24px;background:#f7f7f7;box-sizing:border-box;border:1px solid #d9dde2;border-bottom-color:#c8c8c8"></div>
<svg class="a" style="left:783.0px;top:359.25px" width="10" height="6" viewBox="0 0 10 6"><path d="M0 0 H10 L5 5.5 Z" fill="#666"/></svg>
<div class="a t" style="left:805.00px;top:353.51px;font-size:18px;color:#ffffff;font-weight:700;letter-spacing:0.04px;">Entradas</div>
<div class="a" style="left:894px;top:349.25px;width:23px;height:24px;background:#f7f7f7;box-sizing:border-box;border:1px solid #d9dde2;border-bottom-color:#c8c8c8"></div>
<svg class="a" style="left:900.5px;top:359.25px" width="10" height="6" viewBox="0 0 10 6"><path d="M0 0 H10 L5 5.5 Z" fill="#666"/></svg>
<div class="a t" style="left:923.10px;top:353.51px;font-size:18px;color:#ffffff;font-weight:700;letter-spacing:-0.24px;">Salidas</div>
<div class="a" style="left:1011px;top:349.25px;width:23px;height:24px;background:#f7f7f7;box-sizing:border-box;border:1px solid #d9dde2;border-bottom-color:#c8c8c8"></div>
<svg class="a" style="left:1017.5px;top:359.25px" width="10" height="6" viewBox="0 0 10 6"><path d="M0 0 H10 L5 5.5 Z" fill="#666"/></svg>
<div class="a t" style="left:1040.00px;top:353.51px;font-size:18px;color:#ffffff;font-weight:700;letter-spacing:0.86px;">Total</div>
<div class="a" style="left:1128.5px;top:349.25px;width:23px;height:24px;background:#f7f7f7;box-sizing:border-box;border:1px solid #d9dde2;border-bottom-color:#c8c8c8"></div>
<svg class="a" style="left:1135.0px;top:359.25px" width="10" height="6" viewBox="0 0 10 6"><path d="M0 0 H10 L5 5.5 Z" fill="#666"/></svg>
<div class="a t" style="left:83.30px;top:383.76px;font-size:18px;color:#1a1a1a;transform:scaleX(1.0042);transform-origin:0 0;-webkit-text-stroke:0.35px #1a1a1a;">P001</div>
<div class="a" style="left:198px;top:376.0px;width:185px;height:29.25px;overflow:hidden">
<div class="a t" style="left:2.56px;top:6.49px;font-size:19.5px;color:#1a1a1a;transform:scaleX(1.0390);transform-origin:0 0;-webkit-text-stroke:0.35px #1a1a1a;">Papel bond</div>
</div>
<div class="a t" style="left:387.99px;top:382.49px;font-size:19.5px;color:#1a1a1a;transform:scaleX(1.0050);transform-origin:0 0;-webkit-text-stroke:0.35px #1a1a1a;">Paquete 100 hojas</div>
<div class="a t" style="left:766.48px;top:383.76px;font-size:18px;color:#1a1a1a;-webkit-text-stroke:0.35px #1a1a1a;">100</div>
<div class="a t" style="left:893.99px;top:383.76px;font-size:18px;color:#1a1a1a;-webkit-text-stroke:0.35px #1a1a1a;">23</div>
<div class="a t" style="left:1010.99px;top:383.76px;font-size:18px;color:#1a1a1a;-webkit-text-stroke:0.35px #1a1a1a;">51</div>
<div class="a t" style="left:1128.49px;top:383.76px;font-size:18px;color:#1a1a1a;-webkit-text-stroke:0.35px #1a1a1a;">72</div>
<div class="a t" style="left:83.30px;top:413.01px;font-size:18px;color:#1a1a1a;transform:scaleX(1.0042);transform-origin:0 0;-webkit-text-stroke:0.35px #1a1a1a;">P002</div>
<div class="a" style="left:198px;top:405.25px;width:185px;height:29.25px;overflow:hidden">
<div class="a t" style="left:2.56px;top:6.49px;font-size:19.5px;color:#1a1a1a;transform:scaleX(1.0365);transform-origin:0 0;-webkit-text-stroke:0.35px #1a1a1a;">Papel vegetal</div>
</div>
<div class="a t" style="left:387.99px;top:411.74px;font-size:19.5px;color:#1a1a1a;transform:scaleX(1.0050);transform-origin:0 0;-webkit-text-stroke:0.35px #1a1a1a;">Paquete 100 hojas</div>
<div class="a t" style="left:766.48px;top:413.01px;font-size:18px;color:#1a1a1a;-webkit-text-stroke:0.35px #1a1a1a;">124</div>
<div class="a t" style="left:893.99px;top:413.01px;font-size:18px;color:#1a1a1a;-webkit-text-stroke:0.35px #1a1a1a;">65</div>
<div class="a t" style="left:1010.99px;top:413.01px;font-size:18px;color:#1a1a1a;-webkit-text-stroke:0.35px #1a1a1a;">50</div>
<div class="a t" style="left:1118.48px;top:413.01px;font-size:18px;color:#1a1a1a;-webkit-text-stroke:0.35px #1a1a1a;">139</div>
<div class="a t" style="left:83.30px;top:442.26px;font-size:18px;color:#1a1a1a;transform:scaleX(1.0042);transform-origin:0 0;-webkit-text-stroke:0.35px #1a1a1a;">P003</div>
<div class="a" style="left:198px;top:434.5px;width:185px;height:29.25px;overflow:hidden">
<div class="a t" style="left:2.58px;top:6.49px;font-size:19.5px;color:#1a1a1a;transform:scaleX(1.0248);transform-origin:0 0;-webkit-text-stroke:0.35px #1a1a1a;">Papel de colores</div>
</div>
<div class="a t" style="left:387.99px;top:440.99px;font-size:19.5px;color:#1a1a1a;transform:scaleX(1.0050);transform-origin:0 0;-webkit-text-stroke:0.35px #1a1a1a;">Paquete 100 hojas</div>
<div class="a t" style="left:766.48px;top:442.26px;font-size:18px;color:#1a1a1a;-webkit-text-stroke:0.35px #1a1a1a;">150</div>
<div class="a t" style="left:893.99px;top:442.26px;font-size:18px;color:#1a1a1a;-webkit-text-stroke:0.35px #1a1a1a;">15</div>
<div class="a t" style="left:1010.99px;top:442.26px;font-size:18px;color:#1a1a1a;-webkit-text-stroke:0.35px #1a1a1a;">10</div>
<div class="a t" style="left:1118.48px;top:442.26px;font-size:18px;color:#1a1a1a;-webkit-text-stroke:0.35px #1a1a1a;">155</div>
<div class="a t" style="left:83.30px;top:471.51px;font-size:18px;color:#1a1a1a;transform:scaleX(1.0042);transform-origin:0 0;-webkit-text-stroke:0.35px #1a1a1a;">P004</div>
<div class="a" style="left:198px;top:463.75px;width:185px;height:29.25px;overflow:hidden">
<div class="a t" style="left:2.57px;top:6.49px;font-size:19.5px;color:#1a1a1a;transform:scaleX(1.0321);transform-origin:0 0;-webkit-text-stroke:0.35px #1a1a1a;">Papel opalina</div>
</div>
<div class="a t" style="left:387.99px;top:470.24px;font-size:19.5px;color:#1a1a1a;transform:scaleX(1.0050);transform-origin:0 0;-webkit-text-stroke:0.35px #1a1a1a;">Paquete 100 hojas</div>
<div class="a t" style="left:766.48px;top:471.51px;font-size:18px;color:#1a1a1a;-webkit-text-stroke:0.35px #1a1a1a;">100</div>
<div class="a t" style="left:893.99px;top:471.51px;font-size:18px;color:#1a1a1a;-webkit-text-stroke:0.35px #1a1a1a;">50</div>
<div class="a t" style="left:1010.99px;top:471.51px;font-size:18px;color:#1a1a1a;-webkit-text-stroke:0.35px #1a1a1a;">20</div>
<div class="a t" style="left:1118.48px;top:471.51px;font-size:18px;color:#1a1a1a;-webkit-text-stroke:0.35px #1a1a1a;">130</div>
<div class="a t" style="left:83.30px;top:500.76px;font-size:18px;color:#1a1a1a;transform:scaleX(1.0042);transform-origin:0 0;-webkit-text-stroke:0.35px #1a1a1a;">P005</div>
<div class="a" style="left:198px;top:493.0px;width:185px;height:29.25px;overflow:hidden">
<div class="a t" style="left:2.57px;top:6.49px;font-size:19.5px;color:#1a1a1a;transform:scaleX(1.0252);transform-origin:0 0;-webkit-text-stroke:0.35px #1a1a1a;">Papel satinado</div>
</div>
<div class="a t" style="left:387.99px;top:499.49px;font-size:19.5px;color:#1a1a1a;transform:scaleX(1.0050);transform-origin:0 0;-webkit-text-stroke:0.35px #1a1a1a;">Paquete 100 hojas</div>
<div class="a t" style="left:776.49px;top:500.76px;font-size:18px;color:#1a1a1a;-webkit-text-stroke:0.35px #1a1a1a;">30</div>
<div class="a t" style="left:904.00px;top:500.76px;font-size:18px;color:#1a1a1a;-webkit-text-stroke:0.35px #1a1a1a;">2</div>
<div class="a t" style="left:1021.00px;top:500.76px;font-size:18px;color:#1a1a1a;-webkit-text-stroke:0.35px #1a1a1a;">5</div>
<div class="a t" style="left:1128.49px;top:500.76px;font-size:18px;color:#1a1a1a;-webkit-text-stroke:0.35px #1a1a1a;">27</div>
<div class="a t" style="left:84.30px;top:530.01px;font-size:18px;color:#1a1a1a;transform:scaleX(0.9803);transform-origin:0 0;-webkit-text-stroke:0.35px #1a1a1a;">X001</div>
<div class="a" style="left:198px;top:522.25px;width:185px;height:29.25px;overflow:hidden">
<div class="a t" style="left:3.60px;top:6.49px;font-size:19.5px;color:#1a1a1a;transform:scaleX(1.0139);transform-origin:0 0;-webkit-text-stroke:0.35px #1a1a1a;">Calculadora sencilla</div>
</div>
<div class="a t" style="left:387.91px;top:528.74px;font-size:19.5px;color:#1a1a1a;transform:scaleX(1.0918);transform-origin:0 0;-webkit-text-stroke:0.35px #1a1a1a;">Individual</div>
<div class="a t" style="left:766.48px;top:530.01px;font-size:18px;color:#1a1a1a;-webkit-text-stroke:0.35px #1a1a1a;">300</div>
<div class="a t" style="left:904.00px;top:530.01px;font-size:18px;color:#1a1a1a;-webkit-text-stroke:0.35px #1a1a1a;">0</div>
<div class="a t" style="left:1021.00px;top:530.01px;font-size:18px;color:#1a1a1a;-webkit-text-stroke:0.35px #1a1a1a;">3</div>
<div class="a t" style="left:1118.48px;top:530.01px;font-size:18px;color:#1a1a1a;-webkit-text-stroke:0.35px #1a1a1a;">297</div>
<div class="a t" style="left:84.30px;top:559.26px;font-size:18px;color:#1a1a1a;transform:scaleX(0.9803);transform-origin:0 0;-webkit-text-stroke:0.35px #1a1a1a;">X002</div>
<div class="a" style="left:198px;top:551.5px;width:185px;height:29.25px;overflow:hidden">
<div class="a t" style="left:3.60px;top:6.49px;font-size:19.5px;color:#1a1a1a;transform:scaleX(1.0501);transform-origin:0 0;-webkit-text-stroke:0.35px #1a1a1a;">Calculadora infantil</div>
</div>
<div class="a t" style="left:387.91px;top:557.99px;font-size:19.5px;color:#1a1a1a;transform:scaleX(1.0918);transform-origin:0 0;-webkit-text-stroke:0.35px #1a1a1a;">Individual</div>
<div class="a t" style="left:766.48px;top:559.26px;font-size:18px;color:#1a1a1a;-webkit-text-stroke:0.35px #1a1a1a;">257</div>
<div class="a t" style="left:893.99px;top:559.26px;font-size:18px;color:#1a1a1a;-webkit-text-stroke:0.35px #1a1a1a;">23</div>
<div class="a t" style="left:1010.99px;top:559.26px;font-size:18px;color:#1a1a1a;-webkit-text-stroke:0.35px #1a1a1a;">12</div>
<div class="a t" style="left:1118.48px;top:559.26px;font-size:18px;color:#1a1a1a;-webkit-text-stroke:0.35px #1a1a1a;">268</div>
<div class="a t" style="left:84.30px;top:588.51px;font-size:18px;color:#1a1a1a;transform:scaleX(0.9803);transform-origin:0 0;-webkit-text-stroke:0.35px #1a1a1a;">X003</div>
<div class="a" style="left:198px;top:580.75px;width:185px;height:29.25px;overflow:hidden">
<div class="a t" style="left:3.60px;top:6.49px;font-size:19.5px;color:#1a1a1a;transform:scaleX(1.0140);transform-origin:0 0;-webkit-text-stroke:0.35px #1a1a1a;">Calculadora profesional</div>
</div>
<div class="a t" style="left:387.91px;top:587.24px;font-size:19.5px;color:#1a1a1a;transform:scaleX(1.0918);transform-origin:0 0;-webkit-text-stroke:0.35px #1a1a1a;">Individual</div>
<div class="a t" style="left:766.48px;top:588.51px;font-size:18px;color:#1a1a1a;-webkit-text-stroke:0.35px #1a1a1a;">200</div>
<div class="a t" style="left:893.99px;top:588.51px;font-size:18px;color:#1a1a1a;-webkit-text-stroke:0.35px #1a1a1a;">42</div>
<div class="a t" style="left:1010.99px;top:588.51px;font-size:18px;color:#1a1a1a;-webkit-text-stroke:0.35px #1a1a1a;">23</div>
<div class="a t" style="left:1118.48px;top:588.51px;font-size:18px;color:#1a1a1a;-webkit-text-stroke:0.35px #1a1a1a;">219</div>
<div class="a t" style="left:84.30px;top:617.76px;font-size:18px;color:#1a1a1a;transform:scaleX(0.9803);transform-origin:0 0;-webkit-text-stroke:0.35px #1a1a1a;">X004</div>
<div class="a" style="left:198px;top:610.0px;width:185px;height:29.25px;overflow:hidden">
<div class="a t" style="left:3.60px;top:6.49px;font-size:19.5px;color:#1a1a1a;transform:scaleX(1.0017);transform-origin:0 0;-webkit-text-stroke:0.35px #1a1a1a;">Calculadora especial</div>
</div>
<div class="a t" style="left:387.91px;top:616.49px;font-size:19.5px;color:#1a1a1a;transform:scaleX(1.0918);transform-origin:0 0;-webkit-text-stroke:0.35px #1a1a1a;">Individual</div>
<div class="a t" style="left:766.48px;top:617.76px;font-size:18px;color:#1a1a1a;-webkit-text-stroke:0.35px #1a1a1a;">108</div>
<div class="a t" style="left:893.99px;top:617.76px;font-size:18px;color:#1a1a1a;-webkit-text-stroke:0.35px #1a1a1a;">10</div>
<div class="a t" style="left:1021.00px;top:617.76px;font-size:18px;color:#1a1a1a;-webkit-text-stroke:0.35px #1a1a1a;">7</div>
<div class="a t" style="left:1121.15px;top:617.76px;font-size:18px;color:#1a1a1a;-webkit-text-stroke:0.35px #1a1a1a;">111</div>
<div class="a t" style="left:83.30px;top:647.01px;font-size:18px;color:#1a1a1a;transform:scaleX(1.0042);transform-origin:0 0;-webkit-text-stroke:0.35px #1a1a1a;">B001</div>
<div class="a" style="left:198px;top:639.25px;width:185px;height:29.25px;overflow:hidden">
<div class="a t" style="left:2.60px;top:6.49px;font-size:19.5px;color:#1a1a1a;transform:scaleX(0.9954);transform-origin:0 0;-webkit-text-stroke:0.35px #1a1a1a;">Lapiz negro</div>
</div>
<div class="a t" style="left:387.91px;top:645.74px;font-size:19.5px;color:#1a1a1a;transform:scaleX(1.0918);transform-origin:0 0;-webkit-text-stroke:0.35px #1a1a1a;">Individual</div>
<div class="a t" style="left:756.47px;top:647.01px;font-size:18px;color:#1a1a1a;-webkit-text-stroke:0.35px #1a1a1a;">1000</div>
<div class="a t" style="left:883.98px;top:647.01px;font-size:18px;color:#1a1a1a;-webkit-text-stroke:0.35px #1a1a1a;">300</div>
<div class="a t" style="left:1021.00px;top:647.01px;font-size:18px;color:#1a1a1a;-webkit-text-stroke:0.35px #1a1a1a;">0</div>
<div class="a t" style="left:1108.47px;top:647.01px;font-size:18px;color:#1a1a1a;-webkit-text-stroke:0.35px #1a1a1a;">1300</div>
<div class="a t" style="left:83.30px;top:676.26px;font-size:18px;color:#1a1a1a;transform:scaleX(1.0042);transform-origin:0 0;-webkit-text-stroke:0.35px #1a1a1a;">B002</div>
<div class="a" style="left:198px;top:668.5px;width:185px;height:29.25px;overflow:hidden">
<div class="a t" style="left:2.59px;top:6.49px;font-size:19.5px;color:#1a1a1a;transform:scaleX(1.0119);transform-origin:0 0;-webkit-text-stroke:0.35px #1a1a1a;">Lapiz rojo</div>
</div>
<div class="a t" style="left:387.91px;top:674.99px;font-size:19.5px;color:#1a1a1a;transform:scaleX(1.0918);transform-origin:0 0;-webkit-text-stroke:0.35px #1a1a1a;">Individual</div>
<div class="a t" style="left:766.48px;top:676.26px;font-size:18px;color:#1a1a1a;-webkit-text-stroke:0.35px #1a1a1a;">704</div>
<div class="a t" style="left:883.98px;top:676.26px;font-size:18px;color:#1a1a1a;-webkit-text-stroke:0.35px #1a1a1a;">450</div>
<div class="a t" style="left:1021.00px;top:676.26px;font-size:18px;color:#1a1a1a;-webkit-text-stroke:0.35px #1a1a1a;">0</div>
<div class="a t" style="left:1109.80px;top:676.26px;font-size:18px;color:#1a1a1a;-webkit-text-stroke:0.35px #1a1a1a;">1154</div>
<div class="a t" style="left:83.30px;top:705.51px;font-size:18px;color:#1a1a1a;transform:scaleX(1.0042);transform-origin:0 0;-webkit-text-stroke:0.35px #1a1a1a;">B003</div>
<div class="a" style="left:198px;top:697.75px;width:185px;height:29.25px;overflow:hidden">
<div class="a t" style="left:2.58px;top:6.49px;font-size:19.5px;color:#1a1a1a;transform:scaleX(1.0240);transform-origin:0 0;-webkit-text-stroke:0.35px #1a1a1a;">Lapiz bicolor</div>
</div>
<div class="a t" style="left:387.91px;top:704.24px;font-size:19.5px;color:#1a1a1a;transform:scaleX(1.0918);transform-origin:0 0;-webkit-text-stroke:0.35px #1a1a1a;">Individual</div>
<div class="a t" style="left:766.48px;top:705.51px;font-size:18px;color:#1a1a1a;-webkit-text-stroke:0.35px #1a1a1a;">499</div>
<div class="a t" style="left:893.99px;top:705.51px;font-size:18px;color:#1a1a1a;-webkit-text-stroke:0.35px #1a1a1a;">79</div>
<div class="a t" style="left:1021.00px;top:705.51px;font-size:18px;color:#1a1a1a;-webkit-text-stroke:0.35px #1a1a1a;">0</div>
<div class="a t" style="left:1118.48px;top:705.51px;font-size:18px;color:#1a1a1a;-webkit-text-stroke:0.35px #1a1a1a;">578</div>
<div class="a t" style="left:83.30px;top:734.76px;font-size:18px;color:#1a1a1a;transform:scaleX(1.0042);transform-origin:0 0;-webkit-text-stroke:0.35px #1a1a1a;">B004</div>
<div class="a" style="left:198px;top:727.0px;width:185px;height:29.25px;overflow:hidden">
<div class="a t" style="left:2.60px;top:6.49px;font-size:19.5px;color:#1a1a1a;transform:scaleX(1.0040);transform-origin:0 0;-webkit-text-stroke:0.35px #1a1a1a;">Lápices de colores</div>
</div>
<div class="a t" style="left:389.00px;top:733.49px;font-size:19.5px;color:#1a1a1a;transform:scaleX(0.9473);transform-origin:0 0;-webkit-text-stroke:0.35px #1a1a1a;">Caja de 20</div>
<div class="a t" style="left:766.48px;top:734.76px;font-size:18px;color:#1a1a1a;-webkit-text-stroke:0.35px #1a1a1a;">662</div>
<div class="a t" style="left:893.99px;top:734.76px;font-size:18px;color:#1a1a1a;-webkit-text-stroke:0.35px #1a1a1a;">45</div>
<div class="a t" style="left:1021.00px;top:734.76px;font-size:18px;color:#1a1a1a;-webkit-text-stroke:0.35px #1a1a1a;">0</div>
<div class="a t" style="left:1118.48px;top:734.76px;font-size:18px;color:#1a1a1a;-webkit-text-stroke:0.35px #1a1a1a;">707</div>
<div class="a t" style="left:84.30px;top:764.01px;font-size:18px;color:#1a1a1a;transform:scaleX(0.9803);transform-origin:0 0;-webkit-text-stroke:0.35px #1a1a1a;">V001</div>
<div class="a" style="left:198px;top:756.25px;width:185px;height:29.25px;overflow:hidden">
<div class="a t" style="left:3.60px;top:6.49px;font-size:19.5px;color:#1a1a1a;transform:scaleX(0.9914);transform-origin:0 0;-webkit-text-stroke:0.35px #1a1a1a;">Cuaderno rayas</div>
</div>
<div class="a t" style="left:387.91px;top:762.74px;font-size:19.5px;color:#1a1a1a;transform:scaleX(1.0918);transform-origin:0 0;-webkit-text-stroke:0.35px #1a1a1a;">Individual</div>
<div class="a t" style="left:756.47px;top:764.01px;font-size:18px;color:#1a1a1a;-webkit-text-stroke:0.35px #1a1a1a;">1005</div>
<div class="a t" style="left:883.98px;top:764.01px;font-size:18px;color:#1a1a1a;-webkit-text-stroke:0.35px #1a1a1a;">100</div>
<div class="a t" style="left:1010.99px;top:764.01px;font-size:18px;color:#1a1a1a;-webkit-text-stroke:0.35px #1a1a1a;">50</div>
<div class="a t" style="left:1108.47px;top:764.01px;font-size:18px;color:#1a1a1a;-webkit-text-stroke:0.35px #1a1a1a;">1055</div>
<div class="a t" style="left:84.30px;top:793.26px;font-size:18px;color:#1a1a1a;transform:scaleX(0.9803);transform-origin:0 0;-webkit-text-stroke:0.35px #1a1a1a;">V002</div>
<div class="a" style="left:198px;top:785.5px;width:185px;height:29.25px;overflow:hidden">
<div class="a t" style="left:3.60px;top:6.49px;font-size:19.5px;color:#1a1a1a;transform:scaleX(1.0136);transform-origin:0 0;-webkit-text-stroke:0.35px #1a1a1a;">Cuaderno cuadro grande</div>
</div>
<div class="a t" style="left:387.91px;top:791.99px;font-size:19.5px;color:#1a1a1a;transform:scaleX(1.0918);transform-origin:0 0;-webkit-text-stroke:0.35px #1a1a1a;">Individual</div>
<div class="a t" style="left:766.48px;top:793.26px;font-size:18px;color:#1a1a1a;-webkit-text-stroke:0.35px #1a1a1a;">900</div>
<div class="a t" style="left:893.99px;top:793.26px;font-size:18px;color:#1a1a1a;-webkit-text-stroke:0.35px #1a1a1a;">50</div>
<div class="a t" style="left:1010.99px;top:793.26px;font-size:18px;color:#1a1a1a;-webkit-text-stroke:0.35px #1a1a1a;">23</div>
<div class="a t" style="left:1118.48px;top:793.26px;font-size:18px;color:#1a1a1a;-webkit-text-stroke:0.35px #1a1a1a;">927</div>
<div class="a t" style="left:84.30px;top:822.51px;font-size:18px;color:#1a1a1a;transform:scaleX(0.9803);transform-origin:0 0;-webkit-text-stroke:0.35px #1a1a1a;">V003</div>
<div class="a" style="left:198px;top:814.75px;width:185px;height:29.25px;overflow:hidden">
<div class="a t" style="left:3.60px;top:6.49px;font-size:19.5px;color:#1a1a1a;transform:scaleX(1.0136);transform-origin:0 0;-webkit-text-stroke:0.35px #1a1a1a;">Cuaderno cuadro chico</div>
</div>
<div class="a t" style="left:387.91px;top:821.24px;font-size:19.5px;color:#1a1a1a;transform:scaleX(1.0918);transform-origin:0 0;-webkit-text-stroke:0.35px #1a1a1a;">Individual</div>
<div class="a t" style="left:766.48px;top:822.51px;font-size:18px;color:#1a1a1a;-webkit-text-stroke:0.35px #1a1a1a;">999</div>
<div class="a t" style="left:893.99px;top:822.51px;font-size:18px;color:#1a1a1a;-webkit-text-stroke:0.35px #1a1a1a;">75</div>
<div class="a t" style="left:1010.99px;top:822.51px;font-size:18px;color:#1a1a1a;-webkit-text-stroke:0.35px #1a1a1a;">48</div>
<div class="a t" style="left:1108.47px;top:822.51px;font-size:18px;color:#1a1a1a;-webkit-text-stroke:0.35px #1a1a1a;">1026</div>
<div class="a t" style="left:84.30px;top:851.76px;font-size:18px;color:#1a1a1a;transform:scaleX(0.9803);transform-origin:0 0;-webkit-text-stroke:0.35px #1a1a1a;">V004</div>
<div class="a" style="left:198px;top:844.0px;width:185px;height:29.25px;overflow:hidden">
<div class="a t" style="left:3.60px;top:6.49px;font-size:19.5px;color:#1a1a1a;transform:scaleX(1.0136);transform-origin:0 0;-webkit-text-stroke:0.35px #1a1a1a;">Cuaderno blanco</div>
</div>
<div class="a t" style="left:387.91px;top:850.49px;font-size:19.5px;color:#1a1a1a;transform:scaleX(1.0918);transform-origin:0 0;-webkit-text-stroke:0.35px #1a1a1a;">Individual</div>
<div class="a t" style="left:766.48px;top:851.76px;font-size:18px;color:#1a1a1a;-webkit-text-stroke:0.35px #1a1a1a;">578</div>
<div class="a t" style="left:893.99px;top:851.76px;font-size:18px;color:#1a1a1a;-webkit-text-stroke:0.35px #1a1a1a;">43</div>
<div class="a t" style="left:1010.99px;top:851.76px;font-size:18px;color:#1a1a1a;-webkit-text-stroke:0.35px #1a1a1a;">79</div>
<div class="a t" style="left:1118.48px;top:851.76px;font-size:18px;color:#1a1a1a;-webkit-text-stroke:0.35px #1a1a1a;">542</div>
<div class="a t" style="left:84.30px;top:881.01px;font-size:18px;color:#1a1a1a;transform:scaleX(0.9803);transform-origin:0 0;-webkit-text-stroke:0.35px #1a1a1a;">V005</div>
<div class="a" style="left:198px;top:873.25px;width:185px;height:29.25px;overflow:hidden">
<div class="a t" style="left:3.60px;top:6.49px;font-size:19.5px;color:#1a1a1a;transform:scaleX(1.0014);transform-origin:0 0;-webkit-text-stroke:0.35px #1a1a1a;">Cuaderno música</div>
</div>
<div class="a t" style="left:387.91px;top:879.74px;font-size:19.5px;color:#1a1a1a;transform:scaleX(1.0918);transform-origin:0 0;-webkit-text-stroke:0.35px #1a1a1a;">Individual</div>
<div class="a t" style="left:766.48px;top:881.01px;font-size:18px;color:#1a1a1a;-webkit-text-stroke:0.35px #1a1a1a;">302</div>
<div class="a t" style="left:893.99px;top:881.01px;font-size:18px;color:#1a1a1a;-webkit-text-stroke:0.35px #1a1a1a;">92</div>
<div class="a t" style="left:1010.99px;top:881.01px;font-size:18px;color:#1a1a1a;-webkit-text-stroke:0.35px #1a1a1a;">10</div>
<div class="a t" style="left:1118.48px;top:881.01px;font-size:18px;color:#1a1a1a;-webkit-text-stroke:0.35px #1a1a1a;">384</div>
<div class="a" style="left:1034px;top:403px;width:121.5px;height:33.5px;box-sizing:border-box;border:3px solid #217346;"></div>
<div class="a" style="left:1149px;top:431px;width:8px;height:7.5px;background:#217346;box-sizing:border-box;border:1px solid #fff;"></div>
<div class="a" style="left:1105.5px;top:408px;width:28.5px;height:28.5px;background:#ffffff;box-sizing:border-box;border:1px solid #c6c6c6;"></div>
<svg class="a" style="left:1109px;top:413px;" width="24" height="20" viewBox="0 0 24 20">
<rect x="1.5" y="1" width="15" height="4.5" rx="1" fill="#fff" stroke="#4a86e8" stroke-width="1.8"/>
<path d="M2 18.5 L9 11.5 L6 11.5 L12 6.5 L18 6.5 L12.5 10 L15.5 10 L7 18.5 Z" fill="#eeb31c"/>
<path d="M9 18 L14.5 13 L12.5 13 L17.5 8.5 L21.5 8.5 L17.5 11.5 L19.5 11.5 L12.5 18 Z" fill="#f3c94a"/>
<path d="M19 4 l2.5 -1.2" stroke="#eeb31c" stroke-width="1.6"/>
</svg>
<div class="a" style="left:1148px;top:898px;width:4px;height:4px;background:#3355aa;"></div>
<div class="a" style="left:1162px;top:289px;width:31px;height:648px;background:#ffffff;"></div>
<div class="a" style="left:1167px;top:292px;width:21.5px;height:21.5px;background:#ffffff;box-sizing:border-box;border:1.5px solid #c6c6c6;"></div>
<svg class="a" style="left:1172px;top:299px" width="12" height="7" viewBox="0 0 12 7"><path d="M0 6.5 H12 L6 0.5 Z" fill="#666"/></svg>
<div class="a" style="left:1167px;top:313px;width:21.5px;height:506px;background:#ffffff;box-sizing:border-box;border:1.5px solid #c6c6c6;"></div>
<div class="a" style="left:1167px;top:821px;width:21.5px;height:95px;background:#f1f1f1;"></div>
<div class="a" style="left:1167px;top:916px;width:21.5px;height:21px;background:#ffffff;box-sizing:border-box;border:1.5px solid #c6c6c6;"></div>
<svg class="a" style="left:1172px;top:923px" width="12" height="7" viewBox="0 0 12 7"><path d="M0 0.5 H12 L6 6.5 Z" fill="#666"/></svg>
<div class="a" style="left:9px;top:937px;width:1184px;height:40px;background:#f3f3f3;"></div>
<svg class="a" style="left:46px;top:949px" width="56" height="14" viewBox="0 0 56 14"><path d="M8 1 L2 7 L8 13 Z" fill="#c3c3c3"/><path d="M45 1 L51 7 L45 13 Z" fill="#c3c3c3"/></svg>
<div class="a" style="left:156px;top:937px;width:128px;height:36px;background:#ffffff;box-sizing:border-box;border:1px solid #d5d5d5;border-top:none;"></div>
<div class="a" style="left:156px;top:970.5px;width:128px;height:2.5px;background:#217346;"></div>
<div class="a t" style="left:172.38px;top:946.42px;font-size:19px;color:#217346;font-weight:700;transform:scaleX(1.0225);transform-origin:0 0;">Inventario</div>
<div class="a t" style="left:301.20px;top:946.42px;font-size:19px;color:#444444;transform:scaleX(0.9967);transform-origin:0 0;">Entradas</div>
<div class="a" style="left:395.5px;top:943px;width:1px;height:28px;background:#c6c6c6;"></div>
<div class="a t" style="left:414.50px;top:946.42px;font-size:19px;color:#444444;transform:scaleX(0.9690);transform-origin:0 0;">Salidas</div>
<div class="a" style="left:492.5px;top:943px;width:1px;height:28px;background:#c6c6c6;"></div>
<svg class="a" style="left:540px;top:944px;" width="28" height="28" viewBox="0 0 28 28">
<circle cx="13.5" cy="13.5" r="11.5" fill="none" stroke="#666" stroke-width="1.6"/>
<path d="M13.5 7.5 v12 M7.5 13.5 h12" stroke="#666" stroke-width="2.4"/>
</svg>
<div class="a" style="left:719px;top:950px;width:2px;height:2px;background:#8a8a8a;"></div>
<div class="a" style="left:719px;top:956px;width:2px;height:2px;background:#8a8a8a;"></div>
<div class="a" style="left:719px;top:962px;width:2px;height:2px;background:#8a8a8a;"></div>
<div class="a" style="left:744.5px;top:946.5px;width:397px;height:22px;background:#e6e6e6;"></div>
<div class="a" style="left:744.5px;top:946.5px;width:21.5px;height:21.5px;background:#ffffff;box-sizing:border-box;border:1.5px solid #c6c6c6;"></div>
<svg class="a" style="left:751px;top:951.5px" width="7" height="12" viewBox="0 0 7 12"><path d="M6.5 0 V12 L0.5 6 Z" fill="#666"/></svg>
<div class="a" style="left:764.5px;top:946.5px;width:263.5px;height:21.5px;background:#ffffff;box-sizing:border-box;border:1.5px solid #c6c6c6;"></div>
<div class="a" style="left:1140.5px;top:946.5px;width:21.5px;height:21.5px;background:#ffffff;box-sizing:border-box;border:1.5px solid #c6c6c6;"></div>
<svg class="a" style="left:1149px;top:951.5px" width="7" height="12" viewBox="0 0 7 12"><path d="M0.5 0 V12 L6.5 6 Z" fill="#666"/></svg>
<div class="a" style="left:9px;top:977px;width:1184px;height:33px;background:#217346;"></div>
<div class="a" style="left:9px;top:977px;width:1184px;height:1px;background:#1b5e38;"></div>
<div class="a t" style="left:20.16px;top:983.61px;font-size:17px;color:#f4f4f4;transform:scaleX(0.8404);transform-origin:0 0;">LISTO</div>
<div class="a" style="left:745.5px;top:978px;width:55px;height:32px;background:#19603a;"></div>
<svg class="a" style="left:762px;top:982px;" width="22" height="22" viewBox="0 0 22 22">
<rect x="1" y="1" width="19" height="19" fill="none" stroke="#fff" stroke-width="1.5"/>
<path d="M7.3 1v19M13.7 1v19M1 7.3h19M1 13.7h19" stroke="#fff" stroke-width="1.5"/>
</svg>
<svg class="a" style="left:817px;top:982px;" width="24" height="22" viewBox="0 0 24 22">
<rect x="1.5" y="1.5" width="20" height="18" fill="none" stroke="#fff" stroke-width="1.5"/>
<rect x="6" y="4.5" width="11" height="12" fill="none" stroke="#fff" stroke-width="1.3"/>
<path d="M8 8h7M8 10.5h7M8 13h7" stroke="#fff" stroke-width="1"/>
</svg>
<svg class="a" style="left:872px;top:982px;" width="24" height="22" viewBox="0 0 24 22">
<rect x="1.5" y="1.5" width="20" height="18" fill="none" stroke="#fff" stroke-width="1.5"/>
<rect x="1.5" y="1.5" width="15" height="11.5" fill="#fff"/>
<path d="M9 2v10.5" stroke="#217346" stroke-width="1.5"/>
</svg>
<div class="a" style="left:920px;top:992px;width:9px;height:2.5px;background:#ffffff;"></div>
<div class="a" style="left:933.5px;top:992.5px;width:147px;height:1.2px;background:#ffffff;"></div>
<div class="a" style="left:1004.5px;top:983.5px;width:5.5px;height:17px;background:#ffffff;"></div>
<div class="a" style="left:1086px;top:992px;width:12px;height:2.5px;background:#ffffff;"></div>
<div class="a" style="left:1090.8px;top:987px;width:2.5px;height:12px;background:#ffffff;"></div>
<div class="a t" style="left:1121.08px;top:983.61px;font-size:17px;color:#f4f4f4;transform:scaleX(0.9217);transform-origin:0 0;">100 %</div>
</body></html>
